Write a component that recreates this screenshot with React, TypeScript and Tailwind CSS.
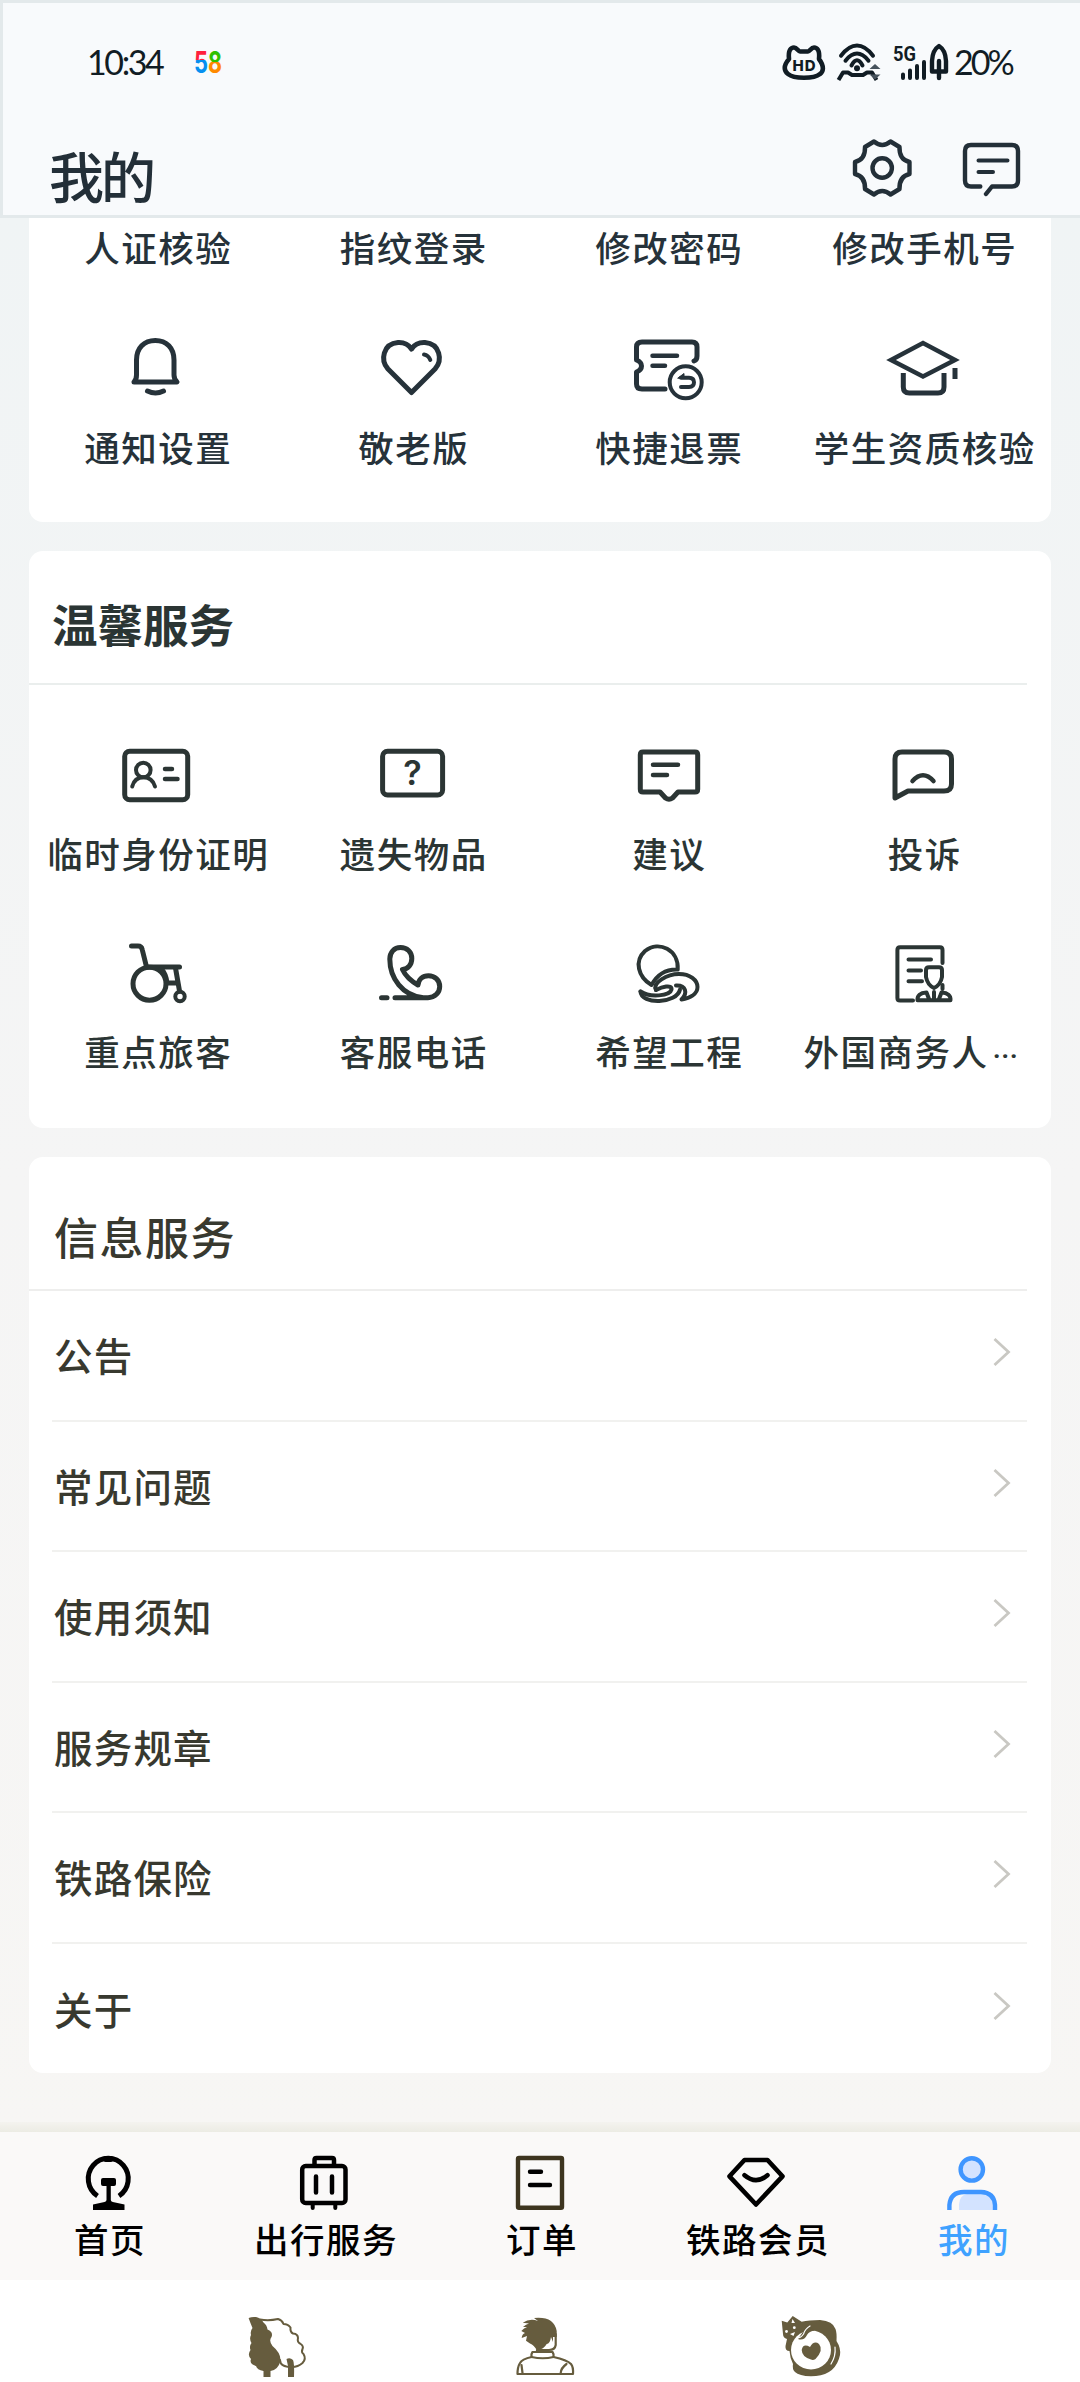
import type { ReactNode } from "react";
import clsx from "clsx";

type IconProps = {
  width?: number;
  height?: number;
  strokeWidth?: number;
  className?: string;
  children: ReactNode;
};

function Icon({ width = 80, height = 72, strokeWidth = 5, className, children }: IconProps) {
  return (
    <svg
      width={width}
      height={height}
      viewBox={`0 0 ${width} ${height}`}
      fill="none"
      stroke="currentColor"
      strokeWidth={strokeWidth}
      strokeLinecap="round"
      strokeLinejoin="round"
      className={clsx("shrink-0", className)}
      aria-hidden="true"
    >
      {children}
    </svg>
  );
}

type Service = {
  label: string;
  truncated?: boolean;
  icon?: ReactNode;
};

const accountServices: Service[] = [
  {
    label: "通知设置",
    icon: (
      <Icon>
        <path d="M17 48C19 46 19.5 44 19.5 41V26C19.5 14 27 6.5 38.3 6.5S57 14 57 26V41C57 44 58 46 60 48Z" />
        <path d="M30.5 57q8 4 16 0" />
      </Icon>
    ),
  },
  {
    label: "敬老版",
    icon: (
      <Icon>
        <path d="M39.5 58.5L16 35C8 26 11 10 26 8.6C32 8.3 36.5 10.5 39.5 15C42.5 10.5 47 8.3 53 8.6C68 10 71 26 63 35Z" />
        <path d="M52 20.5q4.5 .8 6.3 5.5" strokeWidth="4" />
      </Icon>
    ),
  },
  {
    label: "快捷退票",
    icon: (
      <Icon>
        <path d="M66 27q3-1 3-5V13q0-5-5-5H14q-5.5 0-5.5 5V26q5 2 5 6t-5 6V50q0 5 5.5 5H37" />
        <path d="M24.5 21.7H49M24.5 31.8H37" strokeWidth="4.5" />
        <circle cx="57.7" cy="48.3" r="16" strokeWidth="4" />
        <path d="M53 43.7H61q5 0 5 4.6t-5 4.7H53" strokeWidth="4" />
        <path d="M50 44l6-4.5v4.5z" strokeWidth="1" fill="currentColor" />
      </Icon>
    ),
  },
  {
    label: "学生资质核验",
    icon: (
      <Icon>
        <path d="M8 26L40 9L72 26L40 42.5Z" strokeLinejoin="miter" strokeWidth="4.5" />
        <path d="M20.3 39V53q0 6 6 6H55q6 0 6-6V39M72 34V45" strokeLinecap="butt" />
      </Icon>
    ),
  },
];

const warmServices: Service[] = [
  {
    label: "临时身份证明",
    icon: (
      <Icon>
        <rect x="7.7" y="11.3" width="63" height="48.4" rx="5" />
        <circle cx="26.3" cy="30" r="7.3" strokeWidth="4" />
        <path d="M15.2 46.5C17 40 21 37.3 26.5 37.3S36 40 38 46.5" strokeWidth="4" />
        <path d="M48 29H55M48 39H60.5" strokeWidth="4.5" />
      </Icon>
    ),
  },
  {
    label: "遗失物品",
    icon: (
      <Icon>
        <rect x="10.6" y="11.3" width="60" height="43.7" rx="5" />
        <text
          x="40.5"
          y="44.5"
          textAnchor="middle"
          fill="currentColor"
          stroke="none"
          className="font-['Inter'] text-[34px] font-semibold"
        >
          ?
        </text>
      </Icon>
    ),
  },
  {
    label: "建议",
    icon: (
      <Icon>
        <path d="M15 12H67q2.7 0 2.7 2.7V49.3q0 2.7-2.7 2.7H50L44.5 58Q41 60.5 37.5 58L32 52H15q-2.7 0-2.7-2.7V14.7q0-2.7 2.7-2.7Z" />
        <path d="M25 24.7H50M25 35H39" strokeWidth="4.5" />
      </Icon>
    ),
  },
  {
    label: "投诉",
    icon: (
      <Icon>
        <path d="M12 58V19q0-7 7-7H61q7.5 0 7.5 7V44q0 7-7.5 7H25Z" />
        <path d="M29.5 41Q40 29.5 50.5 41" strokeWidth="4.5" />
      </Icon>
    ),
  },
  {
    label: "重点旅客",
    icon: (
      <Icon>
        <path d="M14.5 8H21q3.5 0 4.2 3.5L29.3 28" />
        <path d="M29.3 29H62.5" />
        <circle cx="32.5" cy="45.7" r="16.5" />
        <path d="M44 30.5Q49 36 50 45H60M58.5 30L62.5 53" />
        <circle cx="63" cy="58.5" r="4.7" strokeWidth="4" />
      </Icon>
    ),
  },
  {
    label: "客服电话",
    icon: (
      <Icon>
        <path d="M23 59.7H56C63 59.7 67.7 54.5 67.7 48.5C67.7 42 62.5 37.7 56.5 37.7C50.5 37.7 46.5 41.5 46 47C39 43 33.5 38 30.5 31.5C36 31 39.8 26.5 39.8 20.5C39.8 14 35 9.5 28.5 9.5C22 9.5 17.8 14.5 17.8 21C17.8 41 31 57 50 59.5" />
        <path d="M9.5 59.7H15" />
      </Icon>
    ),
  },
  {
    label: "希望工程",
    icon: (
      <Icon strokeWidth={4}>
        <path d="M23.5 47C10 39 6 23 17 13C31 2 51 12 49.7 31.5C38 31 29 37 23.5 47Z" />
        <path d="M28 52C24 45 39 36 51 36C62 36 69.5 42 69.5 49C69.5 56 62 60 53.5 61.5C60 55 58 47 48 47.5" />
        <path d="M12.5 53.5C13 67 49 66 52 51.5" />
        <path d="M12.5 53.5C22 60 42 58 43.5 51.5C44 46 34 49 28 52" />
      </Icon>
    ),
  },
  {
    label: "外国商务人",
    truncated: true,
    icon: (
      <Icon strokeWidth={4}>
        <path d="M30 62.5H17q-2.6 0-2.6-2.6V12q0-2.7 2.6-2.7H57q2.5 0 2.5 2.7V25" />
        <path d="M25.5 21.5H48M25.5 32.5H38M25.5 43.3H39M59.5 47v4" />
        <path d="M43 32q0-2.8 3-2.8h10q3 0 3 2.8V39Q57.5 47 51 50Q44.5 47 43 39Z" />
        <path d="M34.5 62.2Q34 55 43.5 54.5L46.5 62.2H55.5L58.5 54.5Q68 55 67.5 62.2Z" />
        <path d="M51 54V61" />
      </Icon>
    ),
  },
];

const infoItems = ["公告", "常见问题", "使用须知", "服务规章", "铁路保险", "关于"];

const tabs: { label: string; active?: boolean; icon: ReactNode }[] = [
  {
    label: "首页",
    icon: (
      <Icon width={64} height={60}>
        <path d="M21.5 44A20 20.5 0 1 1 43 44" strokeLinecap="butt" />
        <g fill="currentColor" stroke="none">
          <rect x="27.5" y="4" width="9.5" height="6" rx="2" />
          <path d="M27 26H38q2 0 2 2v4q0 2-2 2h-3.2V48q0 1.5 2 2L48.5 52.5V58H17V52.5L28.5 50q2-.5 2-2V34H27q-2 0-2-2v-4q0-2 2-2Z" />
        </g>
      </Icon>
    ),
  },
  {
    label: "出行服务",
    icon: (
      <Icon width={64} height={60} strokeWidth={4.5}>
        <rect x="10.2" y="14" width="43.3" height="37" rx="3.5" />
        <path d="M22.5 13V8q0-2 2-2H40q2 0 2 2v5" strokeLinecap="butt" />
        <path d="M24 24.5V40.5M40 24.5V40.5" />
        <path d="M20.7 52V56M43.3 52V56" strokeWidth="4" />
      </Icon>
    ),
  },
  {
    label: "订单",
    icon: (
      <Icon width={64} height={60} strokeWidth={4.4}>
        <rect x="10" y="6" width="44" height="49.7" rx="1" className="stroke-[#3d351f]" />
        <path d="M22 19.7H33M22 33H42" />
      </Icon>
    ),
  },
  {
    label: "铁路会员",
    icon: (
      <Icon width={64} height={60} strokeWidth={4.6}>
        <path d="M20.5 8H43.5L58.5 24.3L32 52.5L5.5 24.3Z" />
        <path d="M20.5 23.3Q32 33 43.5 23.3" />
      </Icon>
    ),
  },
  {
    label: "我的",
    active: true,
    icon: (
      <Icon width={64} height={60} strokeWidth={4.4} className="text-[#3f96ff]">
        <path d="M19 58V52Q20 43 27 42H45Q53 44 53 53V58Z" fill="#d3e3ff" stroke="none" />
        <circle cx="31.8" cy="17.4" r="11.2" fill="#d3e3ff" />
        <path d="M9.4 58V53Q10.5 40 24 40H41Q54 40.5 55 53V58" strokeLinecap="butt" />
      </Icon>
    ),
  },
];

function AppBadge() {
  return (
    <svg width="32" height="36" viewBox="0 0 32 36" className="font-['Inter',sans-serif] text-[30px] font-bold">
      <defs>
        <linearGradient id="five" x1="0" y1="0" x2="0" y2="1">
          <stop offset="0.45" stopColor="#ff1f3d" />
          <stop offset="0.45" stopColor="#078ff0" />
        </linearGradient>
        <linearGradient id="eight" x1="0" y1="0" x2="0" y2="1">
          <stop offset="0.5" stopColor="#2fc000" />
          <stop offset="0.5" stopColor="#ff8a00" />
        </linearGradient>
      </defs>
      <text x="3" y="29" textLength="14" lengthAdjust="spacingAndGlyphs" fill="url(#five)">
        5
      </text>
      <text x="17" y="29" textLength="14" lengthAdjust="spacingAndGlyphs" fill="url(#eight)">
        8
      </text>
    </svg>
  );
}

function StatusBar() {
  return (
    <div className="flex h-[40px] items-center justify-between pr-[65px] pl-[84px] text-[#111c24]">
      <div className="flex items-center">
        <span className="w-[104px] font-['Lato',sans-serif] text-[34px] leading-[40px] tracking-[-2.4px]">
          10:34
        </span>
        <AppBadge />
      </div>
      <div className="flex items-center">
        <Icon width={48} height={40} strokeWidth={4.6} className="mr-[6px]">
          <path d="M9 17C8 8 11 5.5 14 5.5S18 9.5 20 9.5H28C30 9.5 31 5.5 34 5.5S40 8 39 17C45 25 43 30 40 32C34 37 14 37 8 32C4 29 3 24 9 17Z" />
          <text
            x="24"
            y="28.5"
            textAnchor="middle"
            fill="currentColor"
            stroke="none"
            textLength="23"
            className="font-['Inter'] text-[15px] font-extrabold"
          >
            HD
          </text>
        </Icon>
        <Icon width={48} height={40} strokeWidth={4} className="mr-[10px]">
          <path d="M7 13.7Q23-6.5 39 13.7M11.5 18.7Q23 4.5 34.5 18.7M17.5 23.5Q23 13 28.5 23.5" />
          <circle cx="23" cy="26.3" r="3" fill="currentColor" stroke="none" />
          <path d="M4.5 38L9 30.5H14L18 33H29L33 30.5H38L42.5 38" strokeLinecap="butt" />
          <path d="M41 22l5.5 5h-11zM41 37.5l5.5-5h-11z" className="fill-[#46525c] stroke-none" />
        </Icon>
        <Icon width={36} height={40} strokeWidth={4}>
          <text
            x="1"
            y="19"
            fill="currentColor"
            stroke="none"
            textLength="23"
            lengthAdjust="spacingAndGlyphs"
            className="font-['Roboto'] text-[21px] font-bold"
          >
            5G
          </text>
          <path d="M11 32.5V36M18 28.5V36M25 24V36M32 20V36" />
        </Icon>
        <Icon width={22} height={40} strokeWidth={4.4}>
          <path d="M4 29.5V19Q4.5 8 11 4Q17.5 8 18 19V29.5Z" />
          <path d="M11 19V36" />
        </Icon>
        <span className="w-[65px] pl-[4px] font-['Lato',sans-serif] text-[34px] leading-[40px] tracking-[-3px]">
          20%
        </span>
      </div>
    </div>
  );
}

function Header() {
  return (
    <header className="h-[218px] border-t-3 border-b-3 border-l-3 border-[#e3e9eb] bg-[#f8fafc] pt-[39px]">
      <StatusBar />
      <div className="flex items-start justify-between pt-[50px] pr-[56px] pl-[46px] text-[#232f38]">
        <h1 className="pt-[4px] text-[55px] leading-[76px] font-medium tracking-[-3px]">我的</h1>
        <div className="flex items-center gap-[46px] pt-[4px]">
          <Icon width={64} height={64} strokeWidth={4.4}>
            <path d="M5 26V38Q15.5 40.5 15 53L24 58.5Q32.2 51.5 40.5 58.5L49.5 53Q49 40.5 59.5 38V26Q49 23.5 49.5 11L40.5 5.5Q32.2 12.5 24 5.5L15 11Q15.5 23.5 5 26Z" />
            <circle cx="32.2" cy="32" r="9.7" />
          </Icon>
          <Icon width={64} height={64} strokeWidth={4.4}>
            <path d="M20.3 50.5H11q-6 0-6-6V15q0-6 6-6H52q6 0 6 6V44.5q0 6-6 6H32L26 58" />
            <path d="M18.5 24.5H47.5M18.5 36H33" strokeWidth="4" />
          </Icon>
        </div>
      </div>
    </header>
  );
}

function ServiceCell({ label, icon, truncated }: Service) {
  return (
    <div className="flex flex-col items-center">
      {icon}
      <span
        className={clsx(
          "text-[35.5px] leading-[48px] font-medium tracking-[1.5px] whitespace-nowrap",
          icon && "mt-[17px]",
          truncated ? "-ml-[25px]" : "ml-[3px]",
        )}
      >
        {label}
        {truncated && <span className="pl-[4px] font-['Roboto',sans-serif] text-[30px] tracking-[0px]">···</span>}
      </span>
    </div>
  );
}

export default function App() {
  return (
    <div className="flex h-[2382px] w-[1080px] flex-col overflow-hidden bg-white font-['Noto_Sans_CJK_SC',sans-serif]">
      <Header />

      <main className="h-[1914px] bg-linear-to-b from-[#f0f4f5] via-[#f5f5f5] to-[#f7f6f4] px-[29px]">
        <section className="h-[304px] rounded-b-[14px] bg-white text-[#26323a]">
          <div className="grid grid-cols-4 pt-[5px]">
            {["人证核验", "指纹登录", "修改密码", "修改手机号"].map((label) => (
              <ServiceCell key={label} label={label} />
            ))}
          </div>
          <div className="grid grid-cols-4 pt-[63px]">
            {accountServices.map((item) => (
              <ServiceCell key={item.label} {...item} />
            ))}
          </div>
        </section>

        <section className="mt-[29px] h-[577px] rounded-[14px] bg-white text-[#2b3534]">
          <div className="mr-[24px] h-[134px] border-b-2 border-[#eaeeed] pt-[42px] pl-[23px]">
            <h2 className="text-[45.5px] leading-[60px] font-bold">温馨服务</h2>
          </div>
          <div className="grid grid-cols-4 gap-y-[61px] pt-[55px]">
            {warmServices.map((item) => (
              <ServiceCell key={item.label} {...item} />
            ))}
          </div>
        </section>

        <section className="mt-[29px] h-[916px] rounded-[14px] bg-white text-[#38392f]">
          <div className="mr-[24px] h-[134px] border-b-2 border-[#eeeeed] pt-[49px] pl-[25px]">
            <h2 className="text-[44px] leading-[60px] font-medium tracking-[1.5px]">信息服务</h2>
          </div>
          <ul className="mr-[24px] ml-[23px]">
            {infoItems.map((item, i) => (
              <li
                key={item}
                className={clsx(
                  "flex h-[130.5px] items-center justify-between pr-[13px] pb-[2px] pl-[2px]",
                  i < infoItems.length - 1 && "border-b-2 border-[#f1f1ef]",
                )}
              >
                <span className="text-[38.5px] leading-[52px] font-medium tracking-[1.2px]">{item}</span>
                <Icon width={24} height={36} strokeWidth={2.8} className="mb-[4px] text-[#c9c8c3]">
                  <path d="M4.5 5L18.5 18L4.5 31" strokeLinecap="butt" strokeLinejoin="miter" />
                </Icon>
              </li>
            ))}
          </ul>
        </section>

        <div className="-mx-[29px] mt-[49px] h-[10px] bg-linear-to-b from-[#f4f3ef] to-[#ecece4]" />
      </main>

      <nav className="grid h-[148px] grid-cols-5 bg-[#faf9f8] pt-[20px] text-black">
        {tabs.map((tab) => (
          <div key={tab.label} className={clsx("flex flex-col items-center", tab.active && "text-[#3fa2ff]")}>
            {tab.icon}
            <span className="mt-[2px] ml-[4px] text-[34.5px] leading-[48px] font-medium tracking-[1.5px]">
              {tab.label}
            </span>
          </div>
        ))}
      </nav>

      <div className="flex pt-[34px] pl-[245px] text-[#665c3e]">
        <Icon width={64} height={66} strokeWidth={2} className="mr-[204px]">
          <path
            d="M3.6 4Q7 2.5 11 3Q16 4 18.5 8.5Q22 11 22.5 15.5Q28.5 18 26.5 23Q23.5 27 27.5 32Q36 39 35.5 47Q33 56 25.5 57V63H18.5V57Q12 56 11 52Q4 50 6 45Q2 41 5.5 36Q4 32 6.5 29Q4 25 6 21Q5 17 7.5 14Q5 8 3.6 4Z"
            fill="currentColor"
            stroke="none"
          />
          <path d="M15 5.5Q24 7 33 5Q37 6 38.5 10Q43 10 45.5 13.5Q45 18 48 19.5Q53 20 53 24Q52 28 55 29.5Q59 32 57.5 35Q56 38 58.5 40Q61.5 45 57.5 49Q53 53 47 53Q35 53 35 46" />
          <path d="M41.5 45Q45 43 48 46Q49.5 49 49 63H43V52Z" fill="currentColor" stroke="none" />
        </Icon>
        <Icon width={64} height={66} strokeWidth={2.2} className="mr-[202px]">
          <path
            d="M9.7 8.7Q17 4 25 7L21 4Q41 2 43.7 17V23H40V28L38 23Q37 30 33.7 30Q31 35 24 36.5Q21 31 17 29.5L13 26.7L14 22L8.7 24Q9 20 12 19L8.3 17Q11 14 14 13L10 13Q13 10 16 9.5Z"
            fill="currentColor"
            stroke="none"
          />
          <path d="M42.7 20V31Q42 36 36 36H24V38" />
          <path d="M19.5 38H39.5Q41 40 40.5 43Q30 45.5 18.5 43Q18 40 19.5 38Z" />
          <path d="M18.7 43Q9 45 7 49Q4.5 53 4.5 60H60Q60.5 53 58 50Q54 46 40.5 43M8.5 51L9.5 59M53.5 50Q48 54 47.7 59" />
        </Icon>
        <Icon width={64} height={66} strokeWidth={2}>
          <path
            d="M2.7 6.7L8.3 8.5L13.7 2L22.7 7.7Q30 6 41 6Q54 7 56.5 15Q58 19 57.5 27Q62 34 61 41Q57 60 37 62Q21 63 16 58Q13 55 14 50Q11 44 10.5 37Q6 37 6.5 32L8 25Q4 24 4 20Z"
            fill="currentColor"
            stroke="none"
          />
          <ellipse cx="32" cy="36" rx="20" ry="19.5" fill="#fff" stroke="none" />
          <path d="M19 25Q25 27 28 21Q30 17 36 16.5L28 12Z" fill="currentColor" stroke="none" />
          <path d="M31 12Q26 15 24.5 20Q22 24 18 24" stroke="#fff" strokeWidth="1.2" />
          <path d="M56 33Q57 42 52 50" stroke="#fff" strokeWidth="1.2" />
          <path
            d="M32 45.5Q23 43 22.7 36Q24 29 31 33Q35 26 40 30Q45 36 36.5 45Q34 46.5 32 45.5Z"
            fill="currentColor"
            stroke="none"
          />
          <g fill="#fff" stroke="none">
            <circle cx="7.5" cy="17.5" r="1.4" />
            <circle cx="15.3" cy="13.7" r="1.4" />
            <path d="M11 20L16 18L14.5 22Z" />
            <path d="M13.5 5L16 9L12.5 9Z" />
          </g>
        </Icon>
      </div>
    </div>
  );
}
